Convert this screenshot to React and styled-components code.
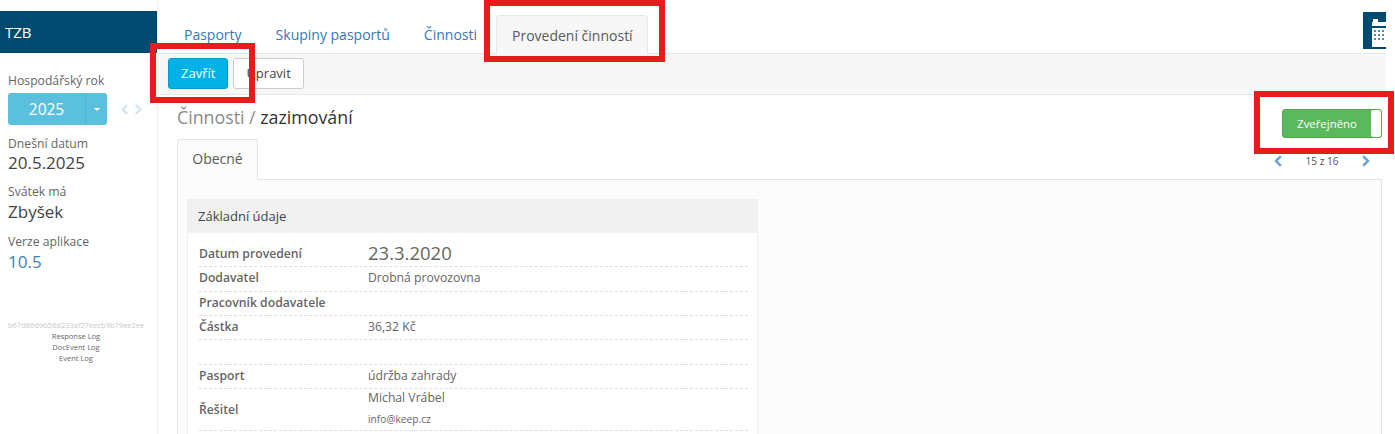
import React from 'react';
import styled, { createGlobalStyle } from 'styled-components';
import { FaChevronLeft, FaChevronRight } from 'react-icons/fa';

const GlobalStyle = createGlobalStyle`
  html, body {
    margin: 0;
    background: #fff;
    overflow: hidden;
  }
  body {
    font-family: "Open Sans", "Liberation Sans", sans-serif;
    font-size: 13px;
    color: #58595b;
  }
`;

const Page = styled.div`
  display: flex;
  width: 1386px;
  height: 434px;
  overflow: hidden;
`;

const Sidebar = styled.aside`
  flex: 0 0 158px;
  min-width: 0;
  box-sizing: border-box;
  padding-top: 11px;
  border-right: 1px solid #eee;
`;

const Brand = styled.div`
  height: 42px;
  background: #004a70;
  color: #fff;
  font-size: 15px;
  line-height: 42px;
  padding-left: 5px;
`;

const SideBlock = styled.div`
  padding: 0 8px;
  display: flex;
  flex-direction: column;
`;

const SideLabel = styled.div`
  font-size: 12.2px;
  line-height: 18px;
  margin-top: ${p => p.$top}px;
  color: #666;
`;

const SideValue = styled.div`
  font-size: 17px;
  line-height: 22px;
  margin-top: ${p => p.$top || 0}px;
  color: ${p => (p.$link ? '#3b82b8' : '#444')};
`;

const YearRow = styled.div`
  display: flex;
  align-items: center;
  margin-top: 3px;
  margin-bottom: 10px;
`;

const YearButton = styled.div`
  width: 77px;
  height: 32px;
  background: #5bc0de;
  color: #fff;
  font-size: 15.5px;
  line-height: 32px;
  text-align: center;
  border-radius: 3px 0 0 3px;
`;

const YearCaret = styled.div`
  width: 22px;
  height: 32px;
  background: #5bc0de;
  border-left: 1px solid #4fb3d2;
  box-sizing: border-box;
  border-radius: 0 3px 3px 0;
  display: flex;
  align-items: center;
  justify-content: center;
  &::after {
    content: '';
    border-top: 3px solid #fff;
    border-left: 3px solid transparent;
    border-right: 3px solid transparent;
  }
`;

const YearArrows = styled.div`
  display: flex;
  gap: 3px;
  margin-left: 12px;
  color: #d3e3f1;
  font-size: 11px;
  svg {
    stroke: currentColor;
    stroke-width: 40;
  }
`;

const DebugBlock = styled.div`
  margin-top: 47px;
  text-align: center;
  font-size: 7.5px;
  line-height: 11px;
  padding-right: 5px;
  color: #666;
`;

const Hash = styled.div`
  color: #c8c8c8;
  white-space: nowrap;
`;

const Main = styled.main`
  flex: 1;
  min-width: 0;
  display: flex;
  flex-direction: column;
`;

const TopBar = styled.div`
  flex: none;
  height: 54px;
  box-sizing: border-box;
  display: flex;
  align-items: flex-end;
  padding-left: 12px;
  border-bottom: 1px solid #e7e7e7;
`;

const NavTab = styled.div`
  box-sizing: border-box;
  height: ${p => (p.$active ? 39 : 38)}px;
  padding: 0 14px;
  line-height: 39px;
  font-size: 14px;
  margin-right: ${p => (p.$active ? 0 : 6)}px;
  color: ${p => (p.$active ? '#58595b' : '#337ab7')};
  ${p => p.$active && `
    background: #f7f7f7;
    border: 1px solid #e7e7e7;
    border-bottom: 0;
    border-radius: 4px 4px 0 0;
    padding: 0 14px 0 15px;
    margin-left: -1px;
    margin-bottom: -1px;
  `}
`;

const CalendarTile = styled.div`
  margin-left: auto;
  margin-bottom: 4px;
  width: 23px;
  height: 37px;
  background: #004a70;
  overflow: hidden;
`;

const Toolbar = styled.div`
  flex: none;
  height: 41px;
  box-sizing: border-box;
  background: #f7f7f7;
  border-bottom: 1px solid #e7e7e7;
  display: flex;
  align-items: center;
  gap: 5px;
  padding: 0 0 1px 10px;
`;

const ToolButton = styled.div`
  box-sizing: border-box;
  height: 31px;
  line-height: 29px;
  padding: 0 12px;
  border-radius: 3px;
  font-size: 13px;
  border: 1px solid ${p => (p.$primary ? '#0a9ccb' : '#ccc')};
  background: ${p => (p.$primary ? '#00b1e6' : '#fff')};
  color: ${p => (p.$primary ? '#fff' : '#444')};
`;

const Content = styled.div`
  flex: none;
  padding: 0 4px 0 19px;
  position: relative;
`;

const Heading = styled.h1`
  margin: 0;
  padding-top: 9px;
  font-size: 17.8px;
  line-height: 26px;
  font-weight: 400;
  color: #333;
`;

const HeadingMuted = styled.span`
  color: #8a8a8a;
`;

const PublishToggle = styled.div`
  position: absolute;
  top: 14px;
  right: 4px;
  width: 100px;
  height: 29px;
  box-sizing: border-box;
  display: flex;
  border: 1px solid #4cae4c;
  border-radius: 3px;
  overflow: hidden;
  background: #5cb85c;
  color: #fff;
  font-size: 11.4px;
`;

const PublishLabel = styled.div`
  flex: 1;
  text-align: center;
  line-height: 27px;
`;

const PublishKnob = styled.div`
  width: 10px;
  background: #fff;
  border-radius: 2px;
`;

const Pager = styled.div`
  position: absolute;
  top: 59px;
  right: 14px;
  width: 100px;
  display: flex;
  justify-content: space-between;
  align-items: center;
  box-sizing: border-box;
  font-size: 10px;
  line-height: 14px;
  color: #555;
  svg {
    color: #6f9fd0;
    font-size: 12px;
    stroke: currentColor;
    stroke-width: 40;
  }
`;

const PaneTabs = styled.div`
  display: flex;
  margin-top: 9px;
`;

const PaneTab = styled.div`
  box-sizing: border-box;
  width: 81px;
  height: 41px;
  line-height: 38px;
  text-align: center;
  font-size: 14px;
  background: #fcfcfc;
  border: 1px solid #e4e4e4;
  border-bottom: 0;
  border-radius: 3px 3px 0 0;
  margin-bottom: -1px;
  position: relative;
  z-index: 1;
`;

const TabPane = styled.div`
  box-sizing: border-box;
  background: #fcfcfc;
  border: 1px solid #e4e4e4;
  padding: 19px 9px;
  height: 300px;
`;

const Panel = styled.section`
  width: 571px;
  box-sizing: border-box;
  background: #fff;
  border: 1px solid #eee;
`;

const PanelTitle = styled.div`
  height: 33px;
  line-height: 33px;
  padding-left: 10px;
  background: #f1f1f1;
  font-size: 13px;
  color: #444;
`;

const Rows = styled.div`
  padding: 10px 9px 0 11px;
`;

const Row = styled.div`
  display: grid;
  grid-template-columns: 169px 1fr;
  align-items: center;
  box-sizing: border-box;
  height: ${p => p.$h}px;
  padding-bottom: 3px;
  border-bottom: 1px dashed #ddd;
`;

const RowLabel = styled.div`
  font-size: 12.2px;
  font-weight: 600;
  color: #666;
`;

const RowValue = styled.div`
  font-size: ${p => (p.$large ? 18.5 : 12.2)}px;
  line-height: ${p => (p.$large ? 1 : 'normal')};
  color: #666;
`;

const SmallLine = styled.div`
  font-size: 10.2px;
  line-height: 22px;
  margin-top: 2px;
`;

const RedBox = styled.div`
  position: absolute;
  left: ${p => p.$x}px;
  top: ${p => p.$y}px;
  width: ${p => p.$w}px;
  height: ${p => p.$h}px;
  box-sizing: border-box;
  border: 6px solid #e81c1c;
  pointer-events: none;
`;

const rows = [
  { label: 'Datum provedení', value: '23.3.2020', large: true, h: 24 },
  { label: 'Dodavatel', value: 'Drobná provozovna', h: 25 },
  { label: 'Pracovník dodavatele', h: 24 },
  { label: 'Částka', value: '36,32 Kč', h: 24 },
  { h: 25 },
  { label: 'Pasport', value: 'údržba zahrady', h: 24 },
];

function CalendarIcon() {
  return (
    <svg width="23" height="37" viewBox="0 0 23 37">
      <rect x="10" y="7" width="5" height="3" fill="#fff" />
      <rect x="9" y="10" width="14" height="4" fill="#fff" />
      <rect x="9" y="16" width="14" height="19" fill="#fff" />
      <g fill="#4a90b8">
        {[0, 1, 2].map(r =>
          [0, 1, 2].map(c => (
            <rect key={`${r}-${c}`} x={11 + c * 4} y={18 + r * 4} width="2" height="2" />
          ))
        )}
      </g>
    </svg>
  );
}

export default function App() {
  return (
    <>
      <GlobalStyle />
      <Page>
        <Sidebar>
          <Brand>TZB</Brand>
          <SideBlock>
            <SideLabel $top={19}>Hospodářský rok</SideLabel>
            <YearRow>
              <YearButton>2025</YearButton>
              <YearCaret />
              <YearArrows>
                <FaChevronLeft />
                <FaChevronRight />
              </YearArrows>
            </YearRow>
            <SideLabel $top={0}>Dnešní datum</SideLabel>
            <SideValue $top={-1}>20.5.2025</SideValue>
            <SideLabel $top={9}>Svátek má</SideLabel>
            <SideValue>Zbyšek</SideValue>
            <SideLabel $top={10}>Verze aplikace</SideLabel>
            <SideValue $link>10.5</SideValue>
            <DebugBlock>
              <Hash>b67d86d9b58d233af27eecb9b79ee2ee</Hash>
              <div>Response Log</div>
              <div>DocEvent Log</div>
              <div>Event Log</div>
            </DebugBlock>
          </SideBlock>
        </Sidebar>
        <Main>
          <TopBar>
            <NavTab>Pasporty</NavTab>
            <NavTab>Skupiny pasportů</NavTab>
            <NavTab>Činnosti</NavTab>
            <NavTab $active>Provedení činností</NavTab>
            <CalendarTile>
              <CalendarIcon />
            </CalendarTile>
          </TopBar>
          <Toolbar>
            <ToolButton $primary>Zavřít</ToolButton>
            <ToolButton>Upravit</ToolButton>
          </Toolbar>
          <Content>
            <Heading>
              <HeadingMuted>Činnosti / </HeadingMuted>zazimování
            </Heading>
            <PublishToggle>
              <PublishLabel>Zveřejněno</PublishLabel>
              <PublishKnob />
            </PublishToggle>
            <Pager>
              <FaChevronLeft />
              <span>15 z 16</span>
              <FaChevronRight />
            </Pager>
            <PaneTabs>
              <PaneTab>Obecné</PaneTab>
            </PaneTabs>
            <TabPane>
              <Panel>
                <PanelTitle>Základní údaje</PanelTitle>
                <Rows>
                  {rows.map((row, i) => (
                    <Row key={i} $h={row.h}>
                      <RowLabel>{row.label}</RowLabel>
                      <RowValue $large={row.large}>{row.value}</RowValue>
                    </Row>
                  ))}
                  <Row $h={42}>
                    <RowLabel>Řešitel</RowLabel>
                    <RowValue>
                      Michal Vrábel
                      <SmallLine>info@keep.cz</SmallLine>
                    </RowValue>
                  </Row>
                  <Row $h={24} />
                </Rows>
              </Panel>
            </TabPane>
          </Content>
        </Main>
      </Page>
      <RedBox $x={484} $y={0} $w={181} $h={62} />
      <RedBox $x={150} $y={43} $w={105} $h={60} />
      <RedBox $x={1254} $y={91} $w={140} $h={63} />
    </>
  );
}
